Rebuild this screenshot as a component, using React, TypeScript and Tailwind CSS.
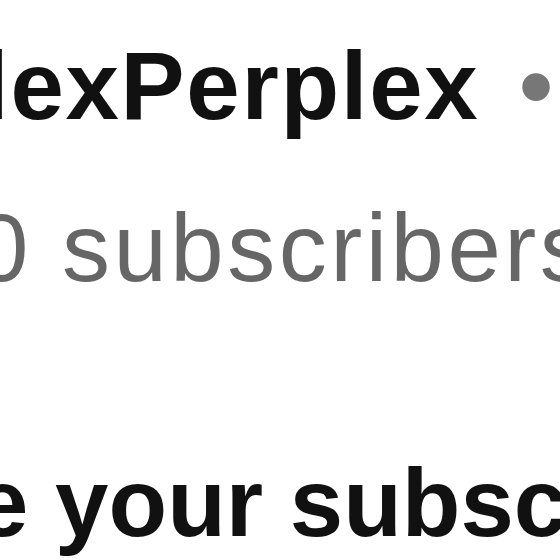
export default function App() {
  return (
    <div className="w-[560px] h-[560px] overflow-hidden bg-white font-['Liberation_Sans',Arial,sans-serif]">
      <div className="flex flex-col whitespace-nowrap">
        <div className="mt-[38px] -ml-[89px] text-[96px] leading-none font-bold tracking-[1.7px] text-[#111]">
          AlexPerplex<span className="ml-[40px] text-[#777]">•</span>
        </div>
        <div className="mt-[66px] -ml-[82px] text-[96px] leading-none tracking-[3.5px] text-[#666]">
          10 subscribers
        </div>
        <div className="mt-[159px] -ml-[329px] text-[96px] leading-none font-bold text-[#111]">
          Manage your subscription
        </div>
      </div>
    </div>
  );
}
